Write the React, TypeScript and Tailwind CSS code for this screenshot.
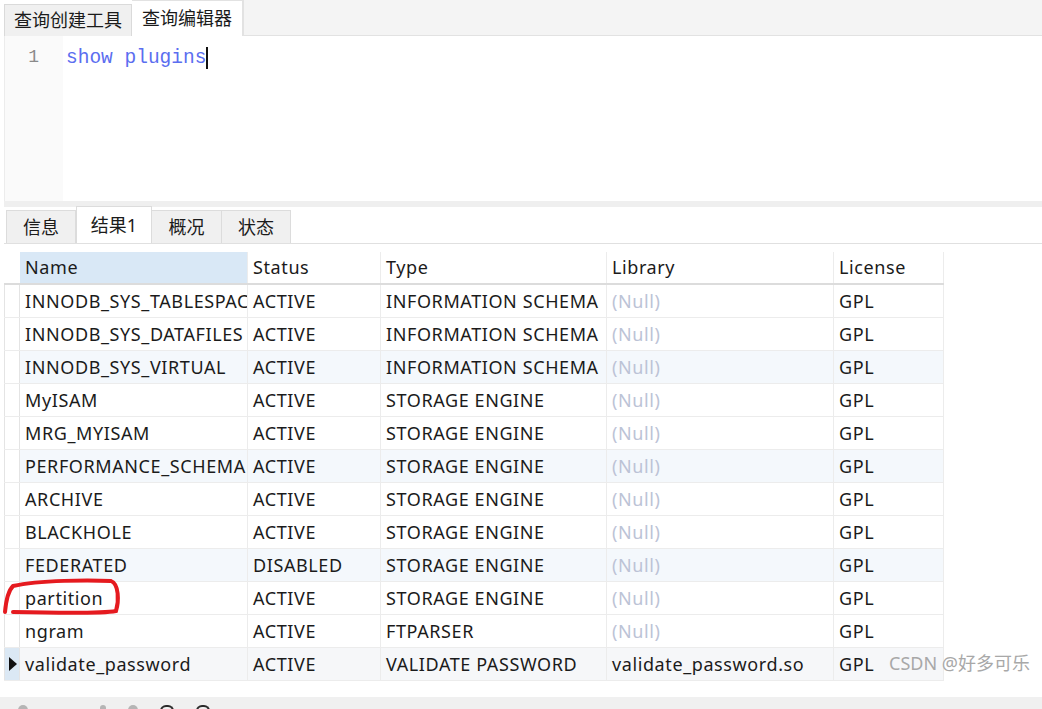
type Row = {
  name: string;
  status: string;
  type: string;
  library: string | null;
  license: string;
};

const rows: Row[] = [
  { name: "INNODB_SYS_TABLESPAC", status: "ACTIVE", type: "INFORMATION SCHEMA", library: null, license: "GPL" },
  { name: "INNODB_SYS_DATAFILES", status: "ACTIVE", type: "INFORMATION SCHEMA", library: null, license: "GPL" },
  { name: "INNODB_SYS_VIRTUAL", status: "ACTIVE", type: "INFORMATION SCHEMA", library: null, license: "GPL" },
  { name: "MyISAM", status: "ACTIVE", type: "STORAGE ENGINE", library: null, license: "GPL" },
  { name: "MRG_MYISAM", status: "ACTIVE", type: "STORAGE ENGINE", library: null, license: "GPL" },
  { name: "PERFORMANCE_SCHEMA", status: "ACTIVE", type: "STORAGE ENGINE", library: null, license: "GPL" },
  { name: "ARCHIVE", status: "ACTIVE", type: "STORAGE ENGINE", library: null, license: "GPL" },
  { name: "BLACKHOLE", status: "ACTIVE", type: "STORAGE ENGINE", library: null, license: "GPL" },
  { name: "FEDERATED", status: "DISABLED", type: "STORAGE ENGINE", library: null, license: "GPL" },
  { name: "partition", status: "ACTIVE", type: "STORAGE ENGINE", library: null, license: "GPL" },
  { name: "ngram", status: "ACTIVE", type: "FTPARSER", library: null, license: "GPL" },
  { name: "validate_password", status: "ACTIVE", type: "VALIDATE PASSWORD", library: "validate_password.so", license: "GPL" },
];

const cell = "h-full shrink-0 overflow-hidden whitespace-nowrap pl-[5px] flex items-center border-r border-[#ececec]";

export default function App() {
  return (
    <div
      className="relative flex h-[709px] w-[1042px] flex-col overflow-hidden bg-white text-[#1b1b1b]"
      style={{ fontFamily: '"Noto Sans", "Noto Sans CJK SC", sans-serif' }}
    >
      {/* top tabs */}
      <div className="flex h-[36px] shrink-0 items-end bg-white pl-[4px]">
        <div className="flex h-[32px] w-[128px] items-center justify-center border border-b-0 border-[#dadada] bg-[#f0f0f0] text-[18px]">
          查询创建工具
        </div>
        <div className="flex h-[36px] w-[111px] items-center justify-center border-t border-r border-[#e2e2e2] bg-white text-[18px]">
          查询编辑器
        </div>
        <div className="h-[36px] flex-1 border-b border-l border-[#e2e2e2] bg-[#f4f4f4]" />
      </div>

      {/* editor */}
      <div className="ml-[4px] flex h-[165px] shrink-0 border-l border-[#ececec]">
        <div className="flex w-[58px] justify-end bg-[#fafafa] pr-[24px] pt-[10px]">
          <span className="text-[18px] leading-[22px] text-[#8a8a8a]" style={{ fontFamily: '"Liberation Mono", monospace' }}>
            1
          </span>
        </div>
        <div className="flex-1 pl-[3px] pt-[9px]">
          <span
            className="border-r-2 border-[#111] text-[19.5px] leading-[23px] text-[#5b6ef0]"
            style={{ fontFamily: '"Liberation Mono", monospace' }}
          >
            show plugins
          </span>
        </div>
      </div>

      {/* splitter */}
      <div className="ml-[4px] h-[6px] shrink-0 bg-[#efefef]" />

      {/* result tabs */}
      <div className="ml-[4px] flex h-[37px] shrink-0 items-end border-b border-[#e0e0e0]">
        <div className="ml-[2px] flex h-[33px] w-[70px] items-center justify-center border border-b-0 border-[#dcdcdc] bg-[#f0f0f0] text-[18px]">
          信息
        </div>
        <div className="flex h-[37px] w-[76px] items-center justify-center border-t border-x border-[#dcdcdc] bg-white text-[18px]">
          结果1
        </div>
        <div className="flex h-[33px] w-[70px] items-center justify-center border-t border-r border-[#dcdcdc] bg-[#f0f0f0] text-[18px]">
          概况
        </div>
        <div className="flex h-[33px] w-[69px] items-center justify-center border-t border-r border-[#dcdcdc] bg-[#f0f0f0] text-[18px]">
          状态
        </div>
      </div>

      {/* grid */}
      <div className="mt-[8px] ml-[4px] flex w-fit flex-col text-[18px] tracking-[0.6px]">
        <div className="flex h-[33px] border-b-2 border-[#dcdcdc]">
          <div className="w-[16px] shrink-0" />
          <div className={`${cell} w-[228px] bg-[#d9e8f6]`}>Name</div>
          <div className={`${cell} w-[133px]`}>Status</div>
          <div className={`${cell} w-[226px]`}>Type</div>
          <div className={`${cell} w-[227px]`}>Library</div>
          <div className={`${cell} w-[110px] border-[#dcdcdc]`}>License</div>
        </div>
        {rows.map((r, i) => {
          const last = i === rows.length - 1;
          const bg = last ? "bg-[#f6f7f9]" : i % 3 === 2 ? "bg-[#f4f8fc]" : "bg-white";
          return (
            <div key={r.name} className={`flex h-[33px] border-b border-[#ececec] ${bg}`}>
              <div
                className={`flex h-full w-[16px] shrink-0 items-center justify-center border-x border-[#e4e4e4] ${
                  last ? "bg-[#dbe8f4]" : "bg-white"
                }`}
              >
                {last && (
                  <svg width="9" height="14" viewBox="0 0 9 14">
                    <path d="M1 0 L9 7 L1 14 Z" fill="#111" />
                  </svg>
                )}
              </div>
              <div className={`${cell} w-[228px]`}>{r.name}</div>
              <div className={`${cell} w-[133px]`}>{r.status}</div>
              <div className={`${cell} w-[226px]`}>{r.type}</div>
              <div className={`${cell} w-[227px] ${r.library ? "" : "text-[#bcc3d6]"}`}>{r.library ?? "(Null)"}</div>
              <div className={`${cell} w-[110px]`}>{r.license}</div>
            </div>
          );
        })}
      </div>

      <div className="flex-1" />

      {/* bottom toolbar (cut off) */}
      <div className="flex h-[12px] shrink-0 items-start gap-[22px] overflow-hidden bg-[#f0f0f0] pl-[18px] pt-[8px]">
        <span className="h-[6px] w-[10px] rounded-t-full bg-[#b5b5b5]" />
        <span className="ml-[50px] h-[6px] w-[6px] rounded-t-full bg-[#b5b5b5]" />
        <span className="h-[6px] w-[10px] rounded-t-full bg-[#b5b5b5]" />
        <span className="h-[6px] w-[14px] rounded-t-full border-2 border-b-0 border-[#2a2a2a]" />
        <span className="h-[6px] w-[14px] rounded-t-full border-2 border-b-0 border-[#2a2a2a]" />
      </div>

      {/* annotation overlay */}
      <svg className="pointer-events-none absolute left-0 top-0" width="1042" height="709">
        <path
          d="M5 612 C 6 601, 8 591, 13 586 C 40 580, 90 580, 111 581 C 119 584, 119 601, 116 611 C 100 614, 55 613, 13 612"
          fill="none"
          stroke="#e51a1f"
          strokeWidth="4"
          strokeLinecap="round"
        />
      </svg>

      {/* watermark */}
      <div className="pointer-events-none absolute left-[889px] top-[650px] text-[18px] text-[#a8a8a8]">
        CSDN @好多可乐
      </div>
    </div>
  );
}
